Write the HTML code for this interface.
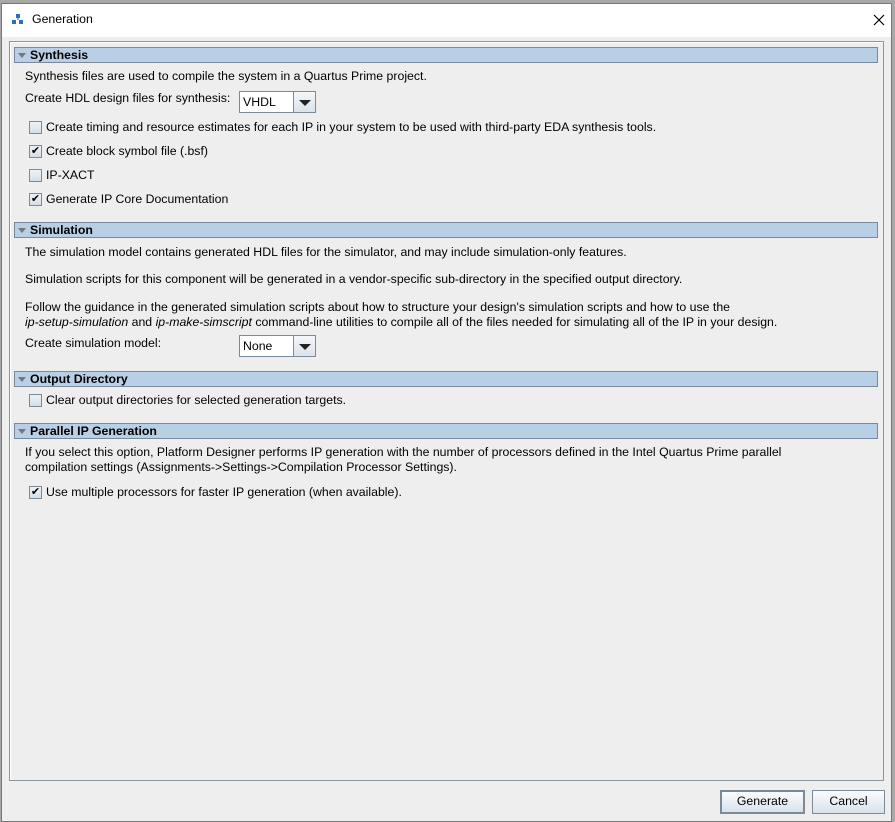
<!DOCTYPE html>
<html><head><style>
*{margin:0;padding:0;box-sizing:border-box}
body{width:895px;height:822px;background:#a8a8a8;font-family:"Liberation Sans",sans-serif;font-size:12.3px;color:#000;position:relative;overflow:hidden}
.win{position:absolute;left:1px;top:3px;width:891px;height:819px;background:#eeeeee;border:1px solid #777}
.title{position:absolute;left:0;top:0;width:100%;height:33px;background:#fff}
.a{position:absolute;white-space:nowrap}
.panel{position:absolute;left:8px;top:38px;width:875px;height:740px;border:1px solid #8a96a2;box-shadow:inset 1px 1px 0 #fff}
.hdr{position:absolute;left:14px;width:864px;height:16px;background:#b8cfe5;border:1px solid #7a8a9a;font-weight:bold;padding-left:15px;line-height:14px}
.hdr:before{content:"";position:absolute;left:3px;top:5px;border-left:4px solid transparent;border-right:4px solid transparent;border-top:5px solid #777}
.cb{position:absolute;width:13px;height:13px;border:1px solid #7a8a99;background:linear-gradient(#eef2f6,#d5dee8);font-size:11px;line-height:11px;text-align:center}
.combo{position:absolute;left:239px;width:77px;height:22px;border:1px solid #7a8a99;background:#fff;padding-left:3px;line-height:20px}
.combo i{position:absolute;right:0;top:0;width:22px;height:20px;border-left:1px solid #7a8a99;background:linear-gradient(#f4f7fa,#dbe3eb)}
.combo i:after{content:"";position:absolute;left:5px;top:8px;border-left:6px solid transparent;border-right:6px solid transparent;border-top:6px solid #222}
.btn{position:absolute;top:786px;height:24px;border:1px solid #7a8a99;background:linear-gradient(#fbfcfd,#d8e2ec);text-align:center;line-height:21px}
</style></head><body>
<div class="win">
<div class="title">
<svg class="a" style="left:10px;top:10px" width="12" height="11"><rect x="4" y="0" width="4" height="4" fill="#2a6fc0"/><rect x="0" y="6" width="4" height="4" fill="#2a6fc0"/><rect x="7" y="6" width="4" height="4" fill="#2a6fc0"/><rect x="5.5" y="4" width="1" height="2" fill="#2a6fc0"/></svg>
<div class="a" style="left:30px;top:8px">Generation</div>
<svg class="a" style="left:871px;top:10px" width="12" height="12"><path d="M1 1L11 11M11 1L1 11" stroke="#000" stroke-width="1.2"/></svg>
</div>
</div>
<div class="panel" style="left:9px;top:41px"></div>
<div class="hdr" style="top:47px">Synthesis</div>
<div class="a" style="left:25px;top:69px">Synthesis files are used to compile the system in a Quartus Prime project.</div>
<div class="a" style="left:25px;top:91px">Create HDL design files for synthesis:</div>
<div class="combo" style="top:91px">VHDL<i></i></div>
<div class="cb" style="left:29px;top:121px"></div><div class="a" style="left:46px;top:120px">Create timing and resource estimates for each IP in your system to be used with third-party EDA synthesis tools.</div>
<div class="cb" style="left:29px;top:145px">✔</div><div class="a" style="left:46px;top:144px">Create block symbol file (.bsf)</div>
<div class="cb" style="left:29px;top:169px"></div><div class="a" style="left:46px;top:168px">IP-XACT</div>
<div class="cb" style="left:29px;top:193px">✔</div><div class="a" style="left:46px;top:192px">Generate IP Core Documentation</div>
<div class="hdr" style="top:222px">Simulation</div>
<div class="a" style="left:25px;top:245px">The simulation model contains generated HDL files for the simulator, and may include simulation-only features.</div>
<div class="a" style="left:25px;top:272px">Simulation scripts for this component will be generated in a vendor-specific sub-directory in the specified output directory.</div>
<div class="a" style="left:25px;top:300px">Follow the guidance in the generated simulation scripts about how to structure your design's simulation scripts and how to use the</div>
<div class="a" style="left:25px;top:315px"><i>ip-setup-simulation</i> and <i>ip-make-simscript</i> command-line utilities to compile all of the files needed for simulating all of the IP in your design.</div>
<div class="a" style="left:25px;top:336px">Create simulation model:</div>
<div class="combo" style="top:335px">None<i></i></div>
<div class="hdr" style="top:371px">Output Directory</div>
<div class="cb" style="left:29px;top:394px"></div><div class="a" style="left:46px;top:393px">Clear output directories for selected generation targets.</div>
<div class="hdr" style="top:423px">Parallel IP Generation</div>
<div class="a" style="left:25px;top:445px">If you select this option, Platform Designer performs IP generation with the number of processors defined in the Intel Quartus Prime parallel</div>
<div class="a" style="left:25px;top:460px">compilation settings (Assignments-&gt;Settings-&gt;Compilation Processor Settings).</div>
<div class="cb" style="left:29px;top:486px">✔</div><div class="a" style="left:46px;top:485px">Use multiple processors for faster IP generation (when available).</div>
<div class="btn" style="left:720px;top:790px;width:85px;border:2px solid #7a8a99;line-height:19px">Generate</div>
<div class="btn" style="left:812px;top:790px;width:73px">Cancel</div>
</body></html>
